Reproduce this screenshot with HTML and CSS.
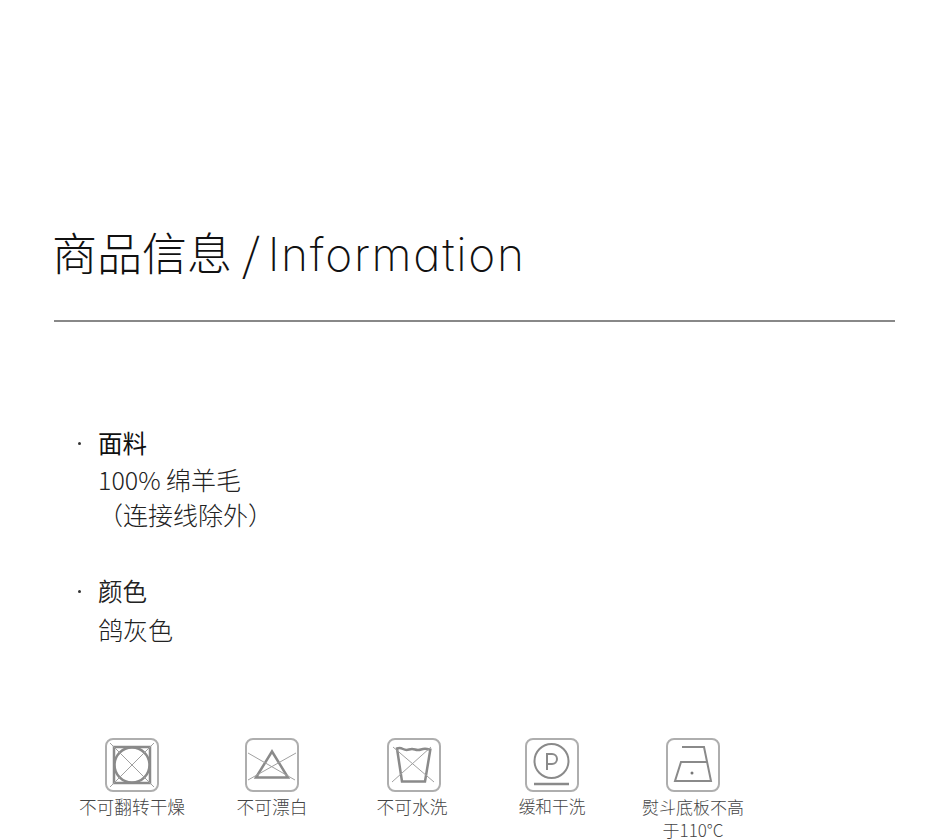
FILE: index.html
```html
<!DOCTYPE html>
<html lang="zh-CN">
<head>
<meta charset="utf-8">
<title>商品信息</title>
<link rel="stylesheet" href="styles.css">
</head>
<body>
<main class="page">
  <h1 class="title">商品信息 / <span class="title-latin">Information</span></h1>
  <ul class="specs">
    <li class="spec">
      <strong class="spec-name">面料</strong>
      <p class="spec-value">100% 绵羊毛<br>（连接线除外）</p>
    </li>
    <li class="spec">
      <span class="spec-name spec-name-regular">颜色</span>
      <p class="spec-value">鸽灰色</p>
    </li>
  </ul>
  <div class="care">
    <figure class="care-item">
      <svg class="care-icon" viewBox="0 0 54 54">
        <rect class="frame" x="1" y="1" width="52" height="52" rx="7"/>
        <rect class="main" x="9" y="9" width="36" height="36"/>
        <circle class="main" cx="27" cy="27" r="17.5"/>
        <path class="thin" d="M5 5L49 49M49 5L5 49"/>
      </svg>
      <figcaption class="care-label">不可翻转干燥</figcaption>
    </figure>
    <figure class="care-item">
      <svg class="care-icon" viewBox="0 0 54 54">
        <rect class="frame" x="1" y="1" width="52" height="52" rx="7"/>
        <path class="main" d="M27 13.500L11 39.500H43Z"/>
        <path class="thin" d="M3 15L50 42M51 15L3 42"/>
      </svg>
      <figcaption class="care-label">不可漂白</figcaption>
    </figure>
    <figure class="care-item">
      <svg class="care-icon care-icon-shifted" viewBox="0 0 54 54">
        <rect class="frame" x="1" y="1" width="52" height="52" rx="7"/>
        <path class="main" d="M10 10.500Q13 9.500 16 11T22 11.500T28 11.500T34 11.500T40 11T43.500 10.500L38 43.500H15Z"/>
        <path class="thin" d="M6 9L47 44M44 9L5 44"/>
      </svg>
      <figcaption class="care-label">不可水洗</figcaption>
    </figure>
    <figure class="care-item">
      <svg class="care-icon" viewBox="0 0 54 54">
        <rect class="frame" x="1" y="1" width="52" height="52" rx="7"/>
        <circle class="mid" cx="26.500" cy="23" r="17"/>
        <path class="mid" d="M22 32V16H27A5 5 0 0 1 27 26H22"/>
        <path class="main" d="M9 46H44"/>
      </svg>
      <figcaption class="care-label care-label-small">缓和干洗</figcaption>
    </figure>
    <figure class="care-item care-item-last">
      <svg class="care-icon" viewBox="0 0 54 54">
        <rect class="frame" x="1" y="1" width="52" height="52" rx="7"/>
        <path class="mid" d="M16 9H38L45 43H9L15 24H41"/>
        <circle class="dot" cx="26" cy="35" r="1.500"/>
      </svg>
      <figcaption class="care-label care-label-medium">熨斗底板不高于110°C</figcaption>
    </figure>
  </div>
</main>
</body>
</html>
```

FILE: styles.css
```css
* {
  box-sizing: border-box;
}

html,
body {
  margin: 0;
  background: #fff;
}

body {
  font-family: "Noto Sans CJK SC", "Noto Sans", sans-serif;
  font-weight: 300;
}

.page {
  height: 839px;
  overflow: hidden;
  padding-top: 222px;
}

.title {
  margin: 0 55px 0 54px;
  height: 100px;
  border-bottom: 2px solid #888;
  font-size: 45px;
  font-weight: 300;
  line-height: 59px;
  color: #111;
  text-indent: -2px;
}

.title-latin {
  margin-left: -2px;
  font-family: Inter, "Noto Sans", sans-serif;
  font-feature-settings: "cv11" 1;
  font-weight: 200;
  font-size: 46px;
  letter-spacing: 1.700px;
}

.specs {
  margin: 103px 0 0;
  padding: 0 0 0 98px;
  list-style: none;
  font-size: 25px;
  line-height: 35px;
  color: #222;
}

.spec {
  position: relative;
  margin-bottom: 41px;
}

.spec::before {
  content: "";
  position: absolute;
  left: -20.500px;
  top: 17px;
  width: 3px;
  height: 3px;
  border-radius: 50%;
  background: #333;
}

.spec-name {
  display: block;
  font-size: 24.500px;
  font-weight: 400;
  color: #111;
}

.spec-name-regular {
  font-weight: 350;
  color: #222;
}

.spec-value {
  margin: 2px 0 0;
}

.spec-name-regular + .spec-value {
  margin-top: 4px;
}

.care {
  display: flex;
  gap: 30px;
  margin: 91px 0 0 77px;
}

.care-item {
  width: 110px;
  margin: 0;
  display: flex;
  flex-direction: column;
  align-items: center;
  gap: 3px;
}

.care-item-last {
  margin-left: 1px;
}

.care-icon {
  display: block;
  width: 54px;
  height: 54px;
}

.care-icon-shifted {
  margin-left: 4px;
}

.care-label {
  font-size: 17.700px;
  font-weight: 300;
  line-height: 23px;
  color: #444;
  text-align: center;
}

.care-label-small {
  font-size: 16.700px;
}

.care-label-medium {
  font-size: 17px;
}

.frame {
  fill: none;
  stroke: #aeaeae;
  stroke-width: 2;
}

.main {
  fill: none;
  stroke: #8a8a8a;
  stroke-width: 2.500;
}

.mid {
  fill: none;
  stroke: #8a8a8a;
  stroke-width: 2;
}

.thin {
  fill: none;
  stroke: #a0a0a0;
  stroke-width: 1;
}

.dot {
  fill: #777;
}
```
